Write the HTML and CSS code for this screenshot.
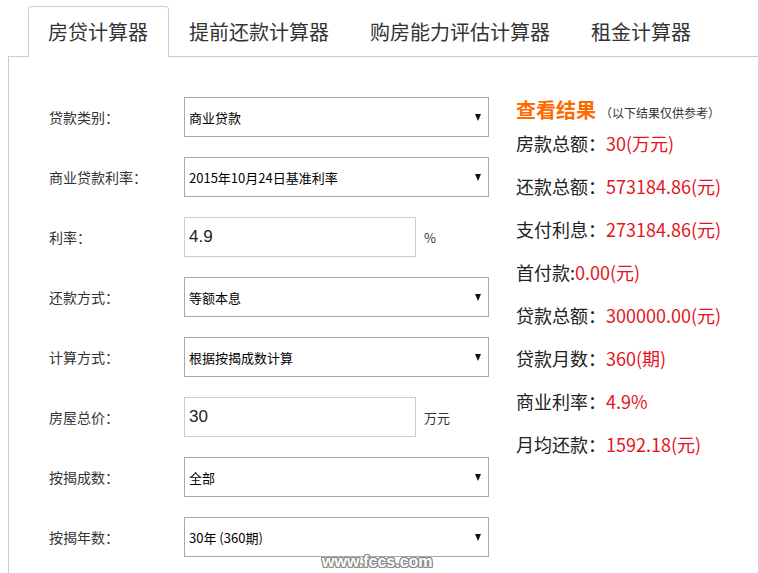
FILE: index.html
```html
<!DOCTYPE html>
<html lang="zh-CN">
<head>
<meta charset="utf-8">
<title>房贷计算器</title>
<link rel="stylesheet" href="styles.css">
</head>
<body>
<div class="page">
  <ul class="tabs">
    <li class="tab active">房贷计算器</li>
    <li class="tab">提前还款计算器</li>
    <li class="tab">购房能力评估计算器</li>
    <li class="tab">租金计算器</li>
  </ul>
  <div class="panel">
    <form class="form">
      <div class="row"><label class="label">贷款类别：</label><div class="select"><span>商业贷款</span><i class="arrow"></i></div></div>
      <div class="row"><label class="label">商业贷款利率：</label><div class="select"><span>2015年10月24日基准利率</span><i class="arrow"></i></div></div>
      <div class="row"><label class="label">利率：</label><input class="input" type="text" value="4.9"><span class="unit">%</span></div>
      <div class="row"><label class="label">还款方式：</label><div class="select"><span>等额本息</span><i class="arrow"></i></div></div>
      <div class="row"><label class="label">计算方式：</label><div class="select"><span>根据按揭成数计算</span><i class="arrow"></i></div></div>
      <div class="row"><label class="label">房屋总价：</label><input class="input" type="text" value="30"><span class="unit">万元</span></div>
      <div class="row"><label class="label">按揭成数：</label><div class="select"><span>全部</span><i class="arrow"></i></div></div>
      <div class="row"><label class="label">按揭年数：</label><div class="select"><span>30年 (360期)</span><i class="arrow"></i></div></div>
    </form>
    <div class="result">
      <h3 class="result-title">查看结果<small>（以下结果仅供参考）</small></h3>
      <p class="line">房款总额：<span class="val">30(万元)</span></p>
      <p class="line">还款总额：<span class="val">573184.86(元)</span></p>
      <p class="line">支付利息：<span class="val">273184.86(元)</span></p>
      <p class="line">首付款:<span class="val">0.00(元)</span></p>
      <p class="line">贷款总额：<span class="val">300000.00(元)</span></p>
      <p class="line">贷款月数：<span class="val">360(期)</span></p>
      <p class="line">商业利率：<span class="val">4.9%</span></p>
      <p class="line">月均还款：<span class="val">1592.18(元)</span></p>
    </div>
  </div>
  <div class="watermark">www.fccs.com</div>
</div>
</body>
</html>
```
FILE: styles.css
```css
html, body {
  margin: 0;
  padding: 0;
  background: #fff;
}
.page {
  position: relative;
  height: 573px;
  overflow: hidden;
  padding: 6px 0 0 8px;
  box-sizing: border-box;
  font-family: "Noto Sans CJK SC", "Microsoft YaHei", sans-serif;
  color: #333;
}
.tabs {
  display: flex;
  list-style: none;
  margin: 0 0 0 20px;
  padding: 0;
}
.tab {
  position: relative;
  height: 50px;
  line-height: 50px;
  padding: 0 20px 0 19px;
  border: 1px solid transparent;
  border-bottom: 0;
  border-radius: 4px 4px 0 0;
  margin-bottom: -1px;
  font-size: 20px;
  color: #333;
  background: transparent;
  white-space: nowrap;
}
.tab.active {
  border-color: #ccc;
  background: #fff;
}
.panel {
  display: flex;
  border-top: 1px solid #ccc;
  border-left: 1px solid #ccc;
  min-height: 530px;
}
.form {
  display: flex;
  flex-direction: column;
  gap: 20px;
  padding: 40px 0 0 40px;
  margin: 0;
}
.row {
  display: flex;
  align-items: center;
  height: 40px;
}
.label {
  width: 135px;
  flex: none;
  font-size: 14px;
  color: #333;
}
.select {
  width: 305px;
  height: 40px;
  box-sizing: border-box;
  border: 1px solid #a9a9a9;
  display: flex;
  align-items: center;
  justify-content: space-between;
  padding: 0 7px 0 4px;
  font-size: 13px;
  color: #000;
  background: #fff;
}
.arrow {
  width: 0;
  height: 0;
  border-style: solid;
  border-width: 7px 3.5px 0;
  border-color: #111 transparent transparent;
}
.input {
  width: 232px;
  height: 40px;
  box-sizing: border-box;
  border: 1px solid #ccc;
  padding: 0 4px;
  margin: 0;
  font-family: "Liberation Sans", Arial, sans-serif;
  font-size: 17px;
  color: #222;
  outline: none;
}
.unit {
  margin-left: 8px;
  font-size: 13px;
  color: #333;
}
.result {
  padding-top: 44px;
  margin-left: 27px;
}
.result-title {
  margin: 0;
  font-size: 20px;
  font-weight: bold;
  line-height: 18px;
  color: #ff6a00;
}
.result-title small {
  margin-left: 4px;
  font-size: 12px;
  font-weight: normal;
  color: #333;
}
.line {
  margin: 0;
  font-size: 18px;
  line-height: 43px;
  color: #222;
  white-space: nowrap;
}
.val {
  color: #e5141c;
}
.watermark {
  position: absolute;
  left: 322px;
  top: 553px;
  font-family: "Liberation Sans", Arial, sans-serif;
  font-size: 16px;
  font-weight: bold;
  color: #fff;
  text-shadow: 1px 0 0 #8a8a8a, -1px 0 0 #8a8a8a, 0 1px 0 #8a8a8a, 0 -1px 0 #8a8a8a, 1px 1px 0 #8a8a8a, -1px -1px 0 #8a8a8a, 1px -1px 0 #8a8a8a, -1px 1px 0 #8a8a8a;
}
```
